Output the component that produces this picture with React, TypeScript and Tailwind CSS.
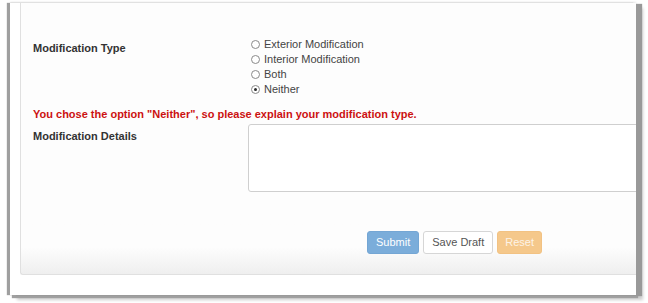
import React from 'react';

const options = [ 'Exterior Modification', 'Interior Modification', 'Both', 'Neither' ];

const Radio = ( { label, checked }: { label: string; checked?: boolean } ) => (
	<label className="flex items-center h-[15px] gap-[4px] text-[#444]">
		<span className="w-[9px] h-[9px] rounded-full border border-[#8a8a8a] bg-white flex items-center justify-center shrink-0">
			{ checked && <span className="w-[3px] h-[3px] rounded-full bg-[#2a2a2a]" /> }
		</span>
		<span>{ label }</span>
	</label>
);

export default function App() {
	return (
		<div
			className="w-[648px] h-[303px] bg-white pt-[3px] pl-[10px] text-[11px] leading-[15px]"
			style={ { fontFamily: '"Liberation Sans", Arial, sans-serif' } }
		>
			<div className="w-[626px] h-[292px] bg-white overflow-hidden pl-[10px] shadow-[-3px_0_1px_#9f9f9f,6px_1px_1px_#999999,2px_3px_1px_#a0a0a0,7px_5px_3px_rgba(0,0,0,0.2),0_-1px_2px_rgba(0,0,0,0.1)]">
				<div className="w-[720px] h-[272px] border-l border-b border-[#e0e0e0] rounded-bl-[3px] bg-linear-to-b from-[#fdfdfd] from-90% to-[#efefef] pl-[12px] pt-[34px] flex flex-col">
					<div className="flex">
						<div className="w-[218px] pt-[4px] font-bold text-[#333]">Modification Type</div>
						<div className="flex flex-col">
							{ options.map( ( o ) => (
								<Radio key={ o } label={ o } checked={ o === 'Neither' } />
							) ) }
						</div>
					</div>

					<p className="mt-[10px] font-bold text-[#cc1111]">
						You chose the option "Neither", so please explain your modification type.
					</p>

					<div className="flex mt-[2px]">
						<div className="w-[215px] pt-[5px] font-bold text-[#333]">Modification Details</div>
						<textarea className="w-[460px] h-[68px] border border-[#cfcfcf] rounded-[3px] bg-white resize-none outline-none" />
					</div>

					<div className="flex gap-[4px] mt-[39px] ml-[334px]">
						<button className="h-[23px] px-[8px] rounded-[3px] bg-[#7badda] border border-[#74a6d4] text-white">
							Submit
						</button>
						<button className="h-[23px] px-[8px] rounded-[3px] bg-white border border-[#d6d6d6] text-[#555]">
							Save Draft
						</button>
						<button className="h-[23px] px-[7px] rounded-[3px] bg-[#f5c88b] border border-[#f2c283] text-[#fdf3e6]">
							Reset
						</button>
					</div>
				</div>
			</div>
		</div>
	);
}
